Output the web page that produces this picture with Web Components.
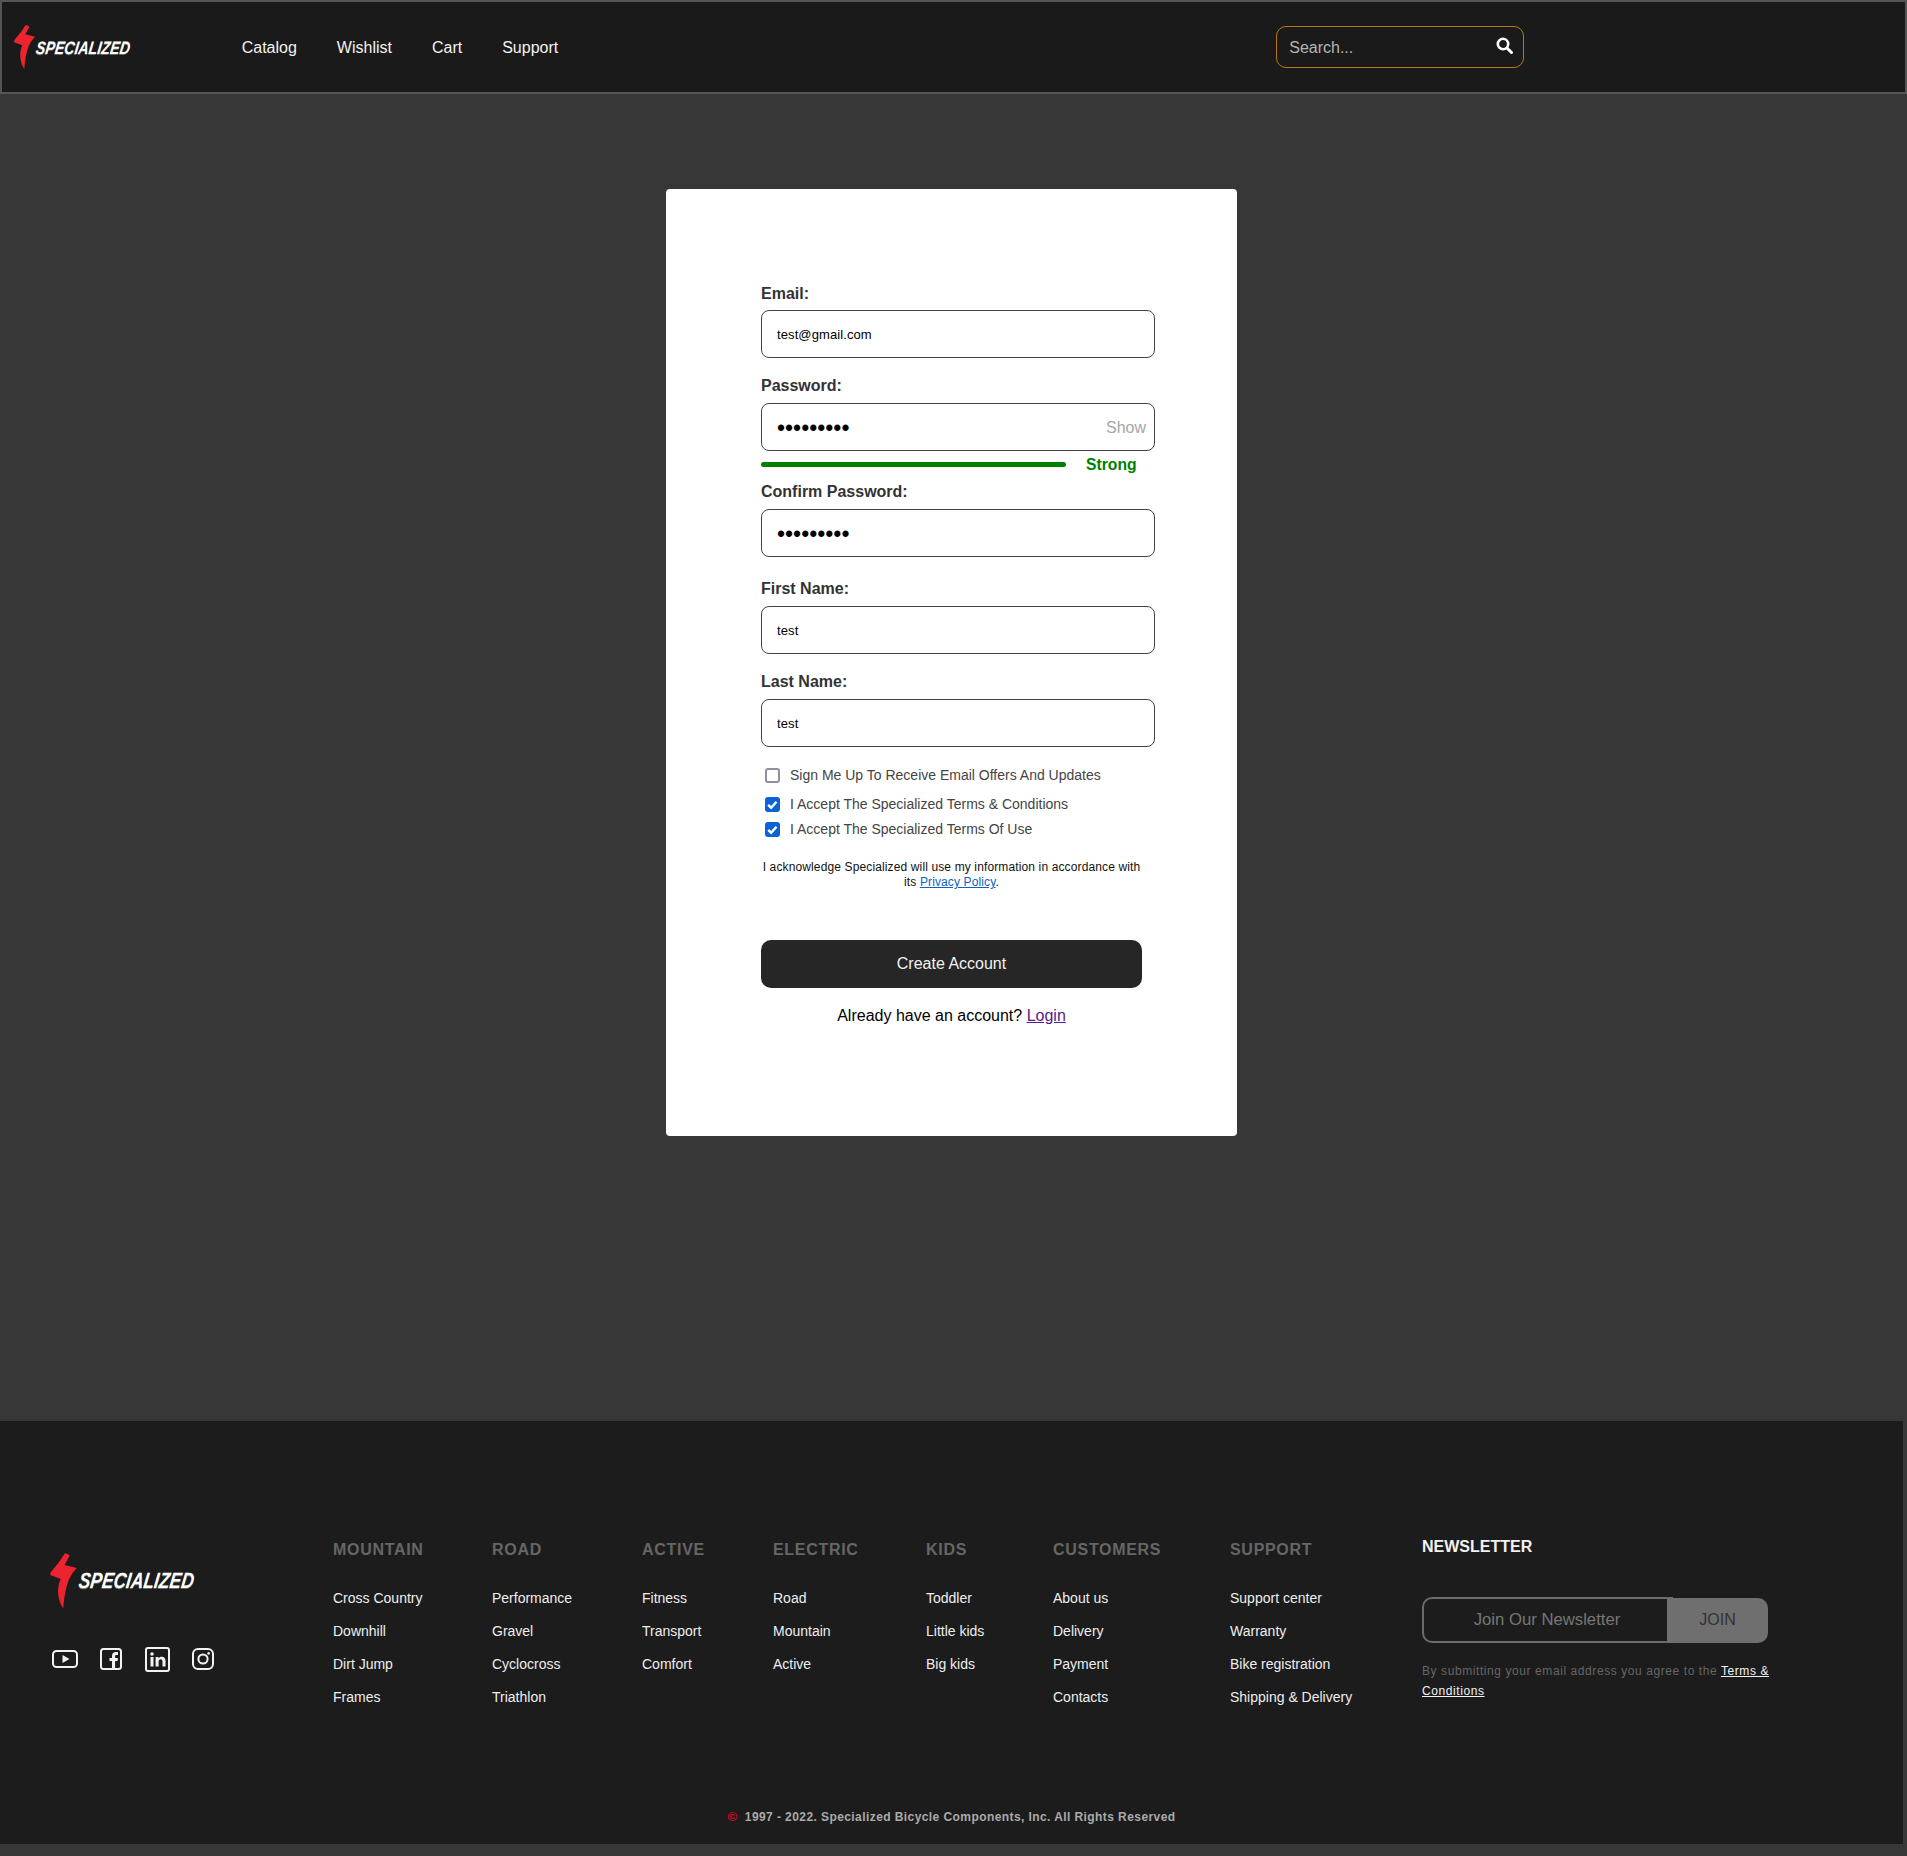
<!DOCTYPE html>
<html lang="en">
<head>
<meta charset="utf-8">
<title>Specialized - Create Account</title>
<style>
    html, body { margin: 0; background: #373737; }
    body { font-family: "Liberation Sans", Arial, sans-serif; width: 1907px; }
</style>
</head>
<body>
<sp-header></sp-header>
<sp-main>
    <sp-card>
        <sp-field label="Email:" value="test@gmail.com" tight></sp-field>
        <sp-field label="Password:" value="testtest1" type="password" show gap="4"></sp-field>
        <sp-strength></sp-strength>
        <sp-field label="Confirm Password:" value="testtest1" type="password" gap="23"></sp-field>
        <sp-field label="First Name:" value="test"></sp-field>
        <sp-field label="Last Name:" value="test" gap="13"></sp-field>
        <sp-check top="20">Sign Me Up To Receive Email Offers And Updates</sp-check>
        <sp-check checked top="14">I Accept The Specialized Terms &amp; Conditions</sp-check>
        <sp-check checked top="10">I Accept The Specialized Terms Of Use</sp-check>
        <sp-signup-end></sp-signup-end>
    </sp-card>
</sp-main>
<sp-footer>
    <sp-links title="MOUNTAIN" width="159" items="Cross Country,Downhill,Dirt Jump,Frames"></sp-links>
    <sp-links title="ROAD" width="150" items="Performance,Gravel,Cyclocross,Triathlon"></sp-links>
    <sp-links title="ACTIVE" width="131" items="Fitness,Transport,Comfort"></sp-links>
    <sp-links title="ELECTRIC" width="153" items="Road,Mountain,Active"></sp-links>
    <sp-links title="KIDS" width="127" items="Toddler,Little kids,Big kids"></sp-links>
    <sp-links title="CUSTOMERS" width="177" items="About us,Delivery,Payment,Contacts"></sp-links>
    <sp-links title="SUPPORT" width="192" items="Support center,Warranty,Bike registration,Shipping &amp; Delivery"></sp-links>
    <sp-newsletter></sp-newsletter>
</sp-footer>

<script>
// small helper, every element gets its own open shadow root..
const shadow = (el, html) => {
    el.attachShadow({mode: 'open'}).innerHTML = html
}

customElements.define('sp-logo', class extends HTMLElement {
    connectedCallback () {
        const big = this.hasAttribute('big')
        const h = big ? 58 : 46
        const size = big ? 22 : 18
        shadow(this, `
            <style>
                :host { display: flex; align-items: center; height: ${h}px; }
                svg { display: block; flex: none; }
                span {
                    display: block;
                    font: italic 700 ${size}px/1 "Liberation Sans", sans-serif;
                    color: #fff;
                    white-space: nowrap;
                    transform: skewX(-8deg) scaleX(.79);
                    transform-origin: left center;
                    margin: ${big ? 0 : 2}px 0 0 ${big ? 1 : 0}px;
                    text-shadow: 0 1px 0 #666;
                }
            </style>
            <svg width="${h * 68 / 138}" height="${h}" viewBox="38 44 68 138">
                <path fill="#ee2330" d="M76 47 Q84 47 87 53 L75 75 L104 82 Q92 94 85 110 Q74 140 72 178 Q64 170 60 146 Q58 124 66 108 L41 99 Q40 94 44 90 Q62 70 76 47 Z"/>
            </svg>
            <span>SPECIALIZED</span>`)
    }
})

customElements.define('sp-header', class extends HTMLElement {
    connectedCallback () {
        shadow(this, `
            <style>
                :host {
                    display: flex; align-items: center;
                    box-sizing: border-box; height: 94px;
                    background: #1a1a1a; border: 2px solid #555;
                    padding-left: 11px;
                }
                nav { display: flex; gap: 40px; margin: 2px 0 0 87px; }
                nav a { color: #f2f2f2; font-size: 16px; text-decoration: none; }
                form {
                    display: flex; align-items: center; justify-content: space-between;
                    box-sizing: border-box; width: 248px; height: 42px;
                    margin-left: 718px; padding: 0 10px 0 12px;
                    border: 1px solid #b9780e; border-radius: 10px;
                }
                span { color: #b5b5b5; font-size: 16px; margin-top: 2px; }
                svg { display: block; margin-top: -4px; }
            </style>
            <sp-logo></sp-logo>
            <nav><a>Catalog</a><a>Wishlist</a><a>Cart</a><a>Support</a></nav>
            <form>
                <span>Search...</span>
                <svg width="17" height="17" viewBox="0 0 17 17" fill="none" stroke="#fff">
                    <circle cx="7" cy="7" r="5.2" stroke-width="2.6"/>
                    <path d="M11 11l4.5 4.5" stroke-width="3" stroke-linecap="round"/>
                </svg>
            </form>`)
    }
})

customElements.define('sp-main', class extends HTMLElement {
    connectedCallback () {
        shadow(this, `
            <style>
                :host {
                    display: flex; justify-content: center; align-items: flex-start;
                    box-sizing: border-box; height: 1327px;
                    padding: 95px 4px 0 0;
                }
            </style>
            <slot></slot>`)
    }
})

customElements.define('sp-card', class extends HTMLElement {
    connectedCallback () {
        shadow(this, `
            <style>
                :host {
                    display: block; box-sizing: border-box;
                    width: 571px; height: 947px;
                    padding: 96px 82px 0 95px;
                    background: #fff; border-radius: 4px;
                }
            </style>
            <slot></slot>`)
    }
})

customElements.define('sp-field', class extends HTMLElement {
    connectedCallback () {
        const type = this.getAttribute('type') || 'text'
        const gap = this.getAttribute('gap') || 19
        shadow(this, `
            <style>
                :host { display: block; margin-bottom: ${gap}px; }
                label {
                    display: block; font-size: 16px; font-weight: 700; line-height: 18px; color: #333;
                    margin-bottom: ${this.hasAttribute('tight') ? 7 : 8}px;
                }
                div { position: relative; }
                input {
                    display: block; box-sizing: border-box; width: 394px; height: 48px;
                    padding: 0 15px; outline: 0;
                    border: 1px solid #444; border-radius: 8px;
                    font: 13px "Liberation Sans", sans-serif; letter-spacing: .1px; color: #000; background: #fff;
                }
                input[type=password] { font-size: 23px; letter-spacing: 0; padding-top: 2px; }
                span { position: absolute; right: 9px; top: 16px; font-size: 16px; color: #a6a6a6; }
            </style>
            <label>${this.getAttribute('label')}</label>
            <div>
                <input type="${type}" value="${this.getAttribute('value')}">
                ${this.hasAttribute('show') ? '<span>Show</span>' : ''}
            </div>`)
    }
})

customElements.define('sp-strength', class extends HTMLElement {
    connectedCallback () {
        shadow(this, `
            <style>
                :host { display: flex; align-items: center; height: 18px; margin-bottom: 10px; }
                i { display: block; width: 305px; height: 5px; background: #008000; border-radius: 3px; }
                b { margin: 2px 0 0 20px; font-size: 15.7px; color: #008000; }
            </style>
            <i></i><b>Strong</b>`)
    }
})

customElements.define('sp-check', class extends HTMLElement {
    connectedCallback () {
        const checked = this.hasAttribute('checked')
        shadow(this, `
            <style>
                :host {
                    display: flex; align-items: center; gap: 10px;
                    margin: ${this.getAttribute('top')}px 0 0 4px;
                    height: 15px; font-size: 14px; color: #444;
                }
                .box { display: grid; flex: none; width: 15px; height: 15px; margin-top: 1px; }
                input {
                    appearance: none; grid-area: 1 / 1; margin: 0; box-sizing: border-box;
                    width: 15px; height: 15px; border: 2px solid #8f8f9d; border-radius: 3px; background: #fff;
                }
                input:checked { border: 0; background: #0b62d6; }
                svg { grid-area: 1 / 1; display: none; }
                input:checked + svg { display: block; }
            </style>
            <span class="box">
                <input type="checkbox" ${checked ? 'checked' : ''}>
                <svg width="15" height="15" viewBox="0 0 15 15" fill="none" stroke="#fff" stroke-width="2.4"><path d="M3.2 7.8l2.9 2.9 5.4-6"/></svg>
            </span>
            <span><slot></slot></span>`)
    }
})

customElements.define('sp-signup-end', class extends HTMLElement {
    connectedCallback () {
        shadow(this, `
            <style>
                :host { display: block; width: 381px; text-align: center; }
                p { margin: 24px 0 0; font-size: 12px; line-height: 15px; letter-spacing: .13px; color: #111; }
                p a { color: #0b62c4; text-decoration: underline; }
                button {
                    display: block; width: 100%; height: 48px; margin-top: 50px;
                    background: #262626; color: #f2f2f2; border: 0; border-radius: 10px;
                    font: 16px "Liberation Sans", sans-serif;
                }
                div { margin-top: 19px; font-size: 16px; line-height: 18px; color: #000; }
                div a { color: #551a8b; text-decoration: underline; }
            </style>
            <p>I acknowledge Specialized will use my information in accordance with<br><span>its</span> <a>Privacy Policy</a>.</p>
            <button>Create Account</button>
            <div>Already have an account? <a>Login</a></div>`)
    }
})

customElements.define('sp-social', class extends HTMLElement {
    connectedCallback () {
        shadow(this, `
            <style>
                :host { display: flex; align-items: center; height: 26px; }
                svg { display: block; flex: none; fill: none; stroke: #f2f2f2; stroke-width: 2; }
                .fill { fill: #f2f2f2; stroke: none; }
            </style>
            <svg width="26" height="18" viewBox="0 0 26 18" style="margin-right:22px">
                <rect x="1" y="1" width="24" height="16" rx="3.5"/>
                <path class="fill" d="M10.5 5l7 4-7 4z"/>
            </svg>
            <svg width="22" height="22" viewBox="0 0 22 22" style="margin-right:23px">
                <rect x="1" y="1" width="20" height="20" rx="2.5"/>
                <path class="fill" d="M12 21v-8H9.5v-3H12V8c0-2.6 1.5-4 3.8-4H18v3h-1.5c-1 0-1.4.5-1.4 1.4V10H18l-.5 3h-2.4v8z"/>
            </svg>
            <svg width="25" height="25" viewBox="0 0 25 25" style="margin-right:22px">
                <rect x="1" y="1" width="23" height="23" rx="2"/>
                <path class="fill" d="M5.5 10h3v9.5h-3zM7 5.2a1.8 1.8 0 1 1 0 3.6 1.8 1.8 0 0 1 0-3.6zM10.6 10h2.9v1.4c.6-1 1.8-1.7 3.2-1.7 2.7 0 3.8 1.6 3.8 4.4v5.4h-3v-4.9c0-1.4-.4-2.4-1.7-2.4-1.4 0-2.2 1-2.2 2.5v4.8h-3z"/>
            </svg>
            <svg width="22" height="22" viewBox="0 0 22 22">
                <rect x="1" y="1" width="20" height="20" rx="5"/>
                <circle cx="11" cy="11" r="4.6"/>
                <circle class="fill" cx="16.6" cy="5.4" r="1.3"/>
            </svg>`)
    }
})

customElements.define('sp-links', class extends HTMLElement {
    connectedCallback () {
        const items = this.getAttribute('items').split(',')
        shadow(this, `
            <style>
                :host { display: block; flex: none; width: ${this.getAttribute('width')}px; }
                h4 { margin: 0 0 23px; font-size: 16px; line-height: 18px; font-weight: 700; letter-spacing: .7px; color: #666; }
                a { display: block; font-size: 14px; line-height: 33px; color: #eee; }
            </style>
            <h4>${this.getAttribute('title')}</h4>
            ${items.map(item => `<a>${item}</a>`).join('')}`)
    }
})

customElements.define('sp-newsletter', class extends HTMLElement {
    connectedCallback () {
        shadow(this, `
            <style>
                :host { display: block; flex: none; width: 350px; margin-top: -3px; }
                h4 { margin: 0 0 41px; font-size: 16px; line-height: 18px; font-weight: 700; color: #f2f2f2; }
                .row { display: flex; align-items: flex-start; }
                .join {
                    box-sizing: border-box; width: 251px; height: 46px; padding-right: 3px;
                    border: 2px solid #6b6b6b; border-radius: 10px 0 0 10px;
                    border-right: 0;
                    display: flex; align-items: center; justify-content: center;
                    font-size: 16.7px; color: #777;
                }
                button {
                    width: 101px; height: 45px; margin: 1px 0 0 -6px; padding: 0 0 2px; position: relative;
                    background: #6f6f6f; color: #333; border: 0; border-radius: 0 10px 10px 0;
                    font: 16px "Liberation Sans", sans-serif;
                }
                p { margin: 18px 0 0; width: 352px; font-size: 12px; line-height: 20px; letter-spacing: .58px; color: #666; }
                a { color: #f2f2f2; text-decoration: underline; }
            </style>
            <h4>NEWSLETTER</h4>
            <div class="row"><span class="join">Join Our Newsletter</span><button>JOIN</button></div>
            <p>By submitting your email address you agree to the <a>Terms &amp;</a><br><a>Conditions</a></p>`)
    }
})

customElements.define('sp-footer', class extends HTMLElement {
    connectedCallback () {
        shadow(this, `
            <style>
                :host {
                    display: flex; flex-direction: column;
                    box-sizing: border-box; width: 1903px; height: 423px; padding-top: 120px;
                    background: #1c1c1c;
                }
                .cols { display: flex; }
                .brand { flex: none; box-sizing: border-box; width: 333px; padding: 11px 0 0 49px; }
                sp-social { margin: 36px 0 0 3px; }
                .copy {
                    margin-top: auto; padding-bottom: 20px; text-align: center;
                    font-size: 12px; line-height: 14px; font-weight: 700; letter-spacing: .42px; color: #aaa;
                }
                .copy i { font-style: normal; font-weight: 700; font-size: 13px; letter-spacing: 0; color: #e6001f; margin-right: 4px; }
            </style>
            <div class="cols">
                <div class="brand"><sp-logo big></sp-logo><sp-social></sp-social></div>
                <slot></slot>
            </div>
            <div class="copy"><i>©</i> 1997 - 2022. Specialized Bicycle Components, Inc. All Rights Reserved</div>`)
    }
})
</script>
</body>
</html>
